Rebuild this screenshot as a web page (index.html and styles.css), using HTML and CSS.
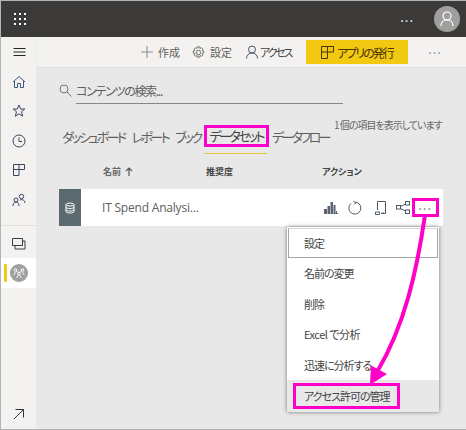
FILE: index.html
```html
<!DOCTYPE html>
<html lang="ja">

<head>
    <meta charset="UTF-8">
    <title>IT Spend</title>
    <link rel="stylesheet" href="styles.css">
</head>

<body>
    <div class="frame">
        <header class="topbar">
            <svg class="waffle" width="14" height="14" viewBox="0 0 14 14" fill="#fff">
                <rect x="1" y="1" width="2" height="2" /><rect x="6" y="1" width="2" height="2" /><rect x="11" y="1" width="2" height="2" />
                <rect x="1" y="6" width="2" height="2" /><rect x="6" y="6" width="2" height="2" /><rect x="11" y="6" width="2" height="2" />
                <rect x="1" y="11" width="2" height="2" /><rect x="6" y="11" width="2" height="2" /><rect x="11" y="11" width="2" height="2" />
            </svg>
            <span class="topbar-dots">...</span>
            <span class="avatar">
                <svg width="14" height="16" viewBox="0 0 14 16" fill="none" stroke="#fff" stroke-width="1.2">
                    <circle cx="7" cy="5" r="4" />
                    <path d="M1 15c0-4 2.500-6 6-6s6 2 6 6" />
                </svg>
            </span>
        </header>

        <div class="body-wrap">
            <nav class="sidebar">
                <div class="nav-icon nav-menu">
                    <svg width="14" height="10" viewBox="0 0 14 10" stroke="#252423" stroke-width="1"><path d="M1.500 1.500h12M1.500 5h12M1.500 8.500h12" /></svg>
                </div>
                <div class="nav-icon">
                    <svg width="14" height="14" viewBox="0 0 14 14" fill="none" stroke="#3a5a80" stroke-width="1"><path d="M1 7l6-5.500L13 7M2.500 6v6.500h3v-4h3v4h3V6" /></svg>
                </div>
                <div class="nav-icon">
                    <svg width="14" height="14" viewBox="0 0 14 14" fill="none" stroke="#3a4660" stroke-width="1"><path d="M7 1l1.700 4h4.100l-3.300 2.700 1.200 4.500L7 9.800l-3.700 2.400 1.200-4.500L1.200 5h4.100z" /></svg>
                </div>
                <div class="nav-icon">
                    <svg width="14" height="14" viewBox="0 0 14 14" fill="none" stroke="#3a4660" stroke-width="1"><circle cx="7" cy="7" r="6" /><path d="M7 3.500V7.500H10" /></svg>
                </div>
                <div class="nav-icon">
                    <svg width="14" height="14" viewBox="0 0 14 14" fill="none" stroke="#3a4660" stroke-width="1"><path d="M1.500 1.500h11v5h-5.500v6h-5.500zM1.500 6.500h5.500M7 1.500v5" /></svg>
                </div>
                <div class="nav-icon">
                    <svg width="14" height="14" viewBox="0 0 14 14" fill="none" stroke="#3a4660" stroke-width="1"><circle cx="4" cy="7" r="2" /><circle cx="9.500" cy="3.500" r="2.200" /><path d="M1 13c0-2.500 1-4 3-4s3 1.500 3 4M8 7c2.500-1 4.500 0 5 3" /></svg>
                </div>
                <div class="nav-sep"></div>
                <div class="nav-icon">
                    <svg width="14" height="12" viewBox="0 0 14 12" fill="none" stroke="#3a3a4a" stroke-width="1"><path d="M3 3h10v8H3z" /><path d="M.5 .5h10v7H.5z" fill="#f3f2f1" /></svg>
                </div>
                <div class="nav-active">
                    <span class="nav-marker"></span>
                    <span class="workspace-badge">
                        <svg width="12" height="12" viewBox="0 0 12 12" fill="none" stroke="#fff" stroke-width="1"><circle cx="2.500" cy="3" r="1.300" /><circle cx="9.500" cy="3" r="1.300" /><circle cx="6" cy="6.500" r="1.300" /><path d="M3.500 4l1.500 1.500M8.500 4L7 5.500M1 8c0-1.500 1-2.500 2-2.500M11 8c0-1.500-1-2.500-2-2.500M4 11c0-2 1-3 2-3s2 1 2 3" /></svg>
                    </span>
                </div>
                <div class="nav-expand">
                    <svg width="12" height="12" viewBox="0 0 12 12" fill="none" stroke="#333" stroke-width="1"><path d="M1 11L10.500 1.500M2.500 1.500h8v8" /></svg>
                </div>
            </nav>

            <div class="main-area">
                <div class="toolbar">
                    <span class="tool tool-create">
                        <svg width="12" height="12" viewBox="0 0 12 12" stroke="#8a8886" stroke-width="1"><path d="M6 0v12M0 6h12" /></svg>作成
                    </span>
                    <span class="tool tool-settings">
                        <svg width="13" height="13" viewBox="0 0 13 13" fill="none" stroke="#6f6e6c" stroke-width="1"><circle cx="6.500" cy="6.500" r="2.200" /><path d="M5.500 .8h2l.4 1.600 1.500-.7 1.400 1.400-.7 1.500 1.600.4v2l-1.600.4.700 1.500-1.400 1.400-1.500-.7-.4 1.600h-2l-.4-1.600-1.500.7-1.400-1.400.7-1.500-1.600-.4v-2l1.600-.4-.7-1.500 1.400-1.400 1.500.7z" /></svg>設定
                    </span>
                    <span class="tool tool-access">
                        <svg width="12" height="14" viewBox="0 0 12 14" fill="none" stroke="#45536b" stroke-width="1"><circle cx="6" cy="4.500" r="3.500" /><path d="M.5 13.500c0-3.500 2.500-5.500 5.500-5.500s5.500 2 5.500 5.500" /></svg><span class="access-label">アクセス</span>
                    </span>
                    <span class="publish">
                        <svg width="13" height="13" viewBox="0 0 13 13" fill="none" stroke="#4a3505" stroke-width="1"><path d="M.5 .5h12v5.500h-6v6.500h-6zM.5 6h6M6.500 .5V6" /></svg><span class="publish-label">アプリの発行</span>
                    </span>
                    <span class="toolbar-dots">...</span>
                </div>

                <div class="content">
                    <div class="search">
                        <svg width="13" height="13" viewBox="0 0 13 13" fill="none" stroke="#77787a" stroke-width="1"><circle cx="5" cy="5" r="4" /><path d="M8 8l4.500 4.500" /></svg>
                        <span class="search-field">コンテンツの検索...</span>
                    </div>

                    <div class="tabs-row">
                        <span class="tab">ダッシュボード</span>
                        <span class="tab">レポート</span>
                        <span class="tab">ブック</span>
                        <span class="tab tab-active"><span class="callout">データセット</span></span>
                        <span class="tab">データフロー</span>
                        <span class="item-count">1 個の項目を表示しています</span>
                    </div>

                    <div class="table-head">
                        <span class="col-name">名前
                            <svg width="8" height="9" viewBox="0 0 8 9" fill="none" stroke="#555" stroke-width="1.200"><path d="M4 9V1M1 4l3-3 3 3" /></svg>
                        </span>
                        <span class="col-rec">推奨度</span>
                        <span class="col-act">アクション</span>
                    </div>

                    <div class="dataset-row">
                        <span class="row-thumb">
                            <svg width="10" height="12" viewBox="0 0 10 12" fill="none" stroke="#fff" stroke-width="1"><ellipse cx="5" cy="2.500" rx="4" ry="1.500" /><path d="M1 2.500v7c0 1 1.800 1.500 4 1.500s4-.5 4-1.500v-7M1 5c0 1 1.800 1.500 4 1.500S9 6 9 5M1 7.500C1 8.500 2.800 9 5 9s4-.5 4-1.500" /></svg>
                        </span>
                        <span class="row-name">IT Spend Analysi...</span>
                        <span class="row-actions">
                            <svg width="14" height="14" viewBox="0 0 14 14" fill="#5a6570"><rect x="0" y="8" width="3" height="5" /><rect x="3.500" y="5" width="2.500" height="8" /><rect x="6.500" y="1" width="2.500" height="12" /><rect x="9.500" y="4" width="2" height="9" /><path d="M12 10h1v2h1v1h-3v-1h1z" /></svg>
                            <svg width="14" height="14" viewBox="0 0 14 14" fill="none" stroke="#4c5a68" stroke-width="1"><path d="M8 1.200A6 6 0 1 1 3 2.500M5.500 .5L8 1.500 6.500 3.500" /></svg>
                            <svg width="12" height="14" viewBox="0 0 12 14" fill="none" stroke="#4c5a68" stroke-width="1"><path d="M2.500 9V.5h8v12H6M.5 11h4v2.500h-4zM8 11v1.500" /></svg>
                            <svg width="14" height="13" viewBox="0 0 14 13" fill="none" stroke="#4c5a68" stroke-width="1"><rect x=".5" y="4.500" width="4" height="3.500" /><rect x="9.500" y=".5" width="4" height="3.500" /><rect x="9.500" y="9" width="4" height="3.500" /><path d="M4.500 5.500L9.500 3M4.500 7.500l5 2.500" /></svg>
                            <span class="row-dots">...</span>
                        </span>
                    </div>
                </div>
            </div>
        </div>

        <ul class="menu">
            <li class="menu-item menu-focus">設定</li>
            <li class="menu-item">名前の変更</li>
            <li class="menu-item">削除</li>
            <li class="menu-item menu-excel">Excel で分析</li>
            <li class="menu-item">迅速に分析する</li>
            <li class="menu-item menu-hover"><span class="callout callout-menu">アクセス許可の管理</span></li>
        </ul>

        <span class="callout-dots"></span>
        <svg class="arrow" width="466" height="430" viewBox="0 0 466 430" fill="none">
            <path d="M425 215C417 270 405 325 377 372" stroke="#ff00c8" stroke-width="4" />
            <path d="M371 383L372 367 385 374z" fill="#ff00c8" stroke="#ff00c8" stroke-width="2" />
        </svg>
    </div>
</body>

</html>
```

FILE: styles.css
```css
* {
    box-sizing: border-box;
}

body {
    margin: 0;
    font-family: "Noto Sans CJK JP", "Liberation Sans", sans-serif;
    font-feature-settings: "palt";
    color: #444;
    background-color: #fff;
}

.frame {
    position: relative;
    width: 466px;
    height: 430px;
    display: flex;
    flex-direction: column;
    overflow: hidden;
    border: 1px solid #b4b4b4;
    border-right: none;
}

/* top bar */
.topbar {
    height: 36px;
    flex: none;
    display: flex;
    align-items: center;
    padding: 0 3px 0 12px;
    background-color: #3b3a39;
}

.topbar-dots {
    margin-left: auto;
    margin-right: 20px;
    margin-top: -5px;
    color: #fff;
    font-size: 13px;
    letter-spacing: 1px;
}

.avatar {
    width: 26px;
    height: 26px;
    display: flex;
    align-items: center;
    justify-content: center;
    border-radius: 50%;
    background-color: #a19f9d;
    margin-right: 3px;
}

.body-wrap {
    flex: 1;
    display: flex;
    min-height: 0;
}

/* left nav */
.sidebar {
    width: 36px;
    flex: none;
    display: flex;
    flex-direction: column;
    background-color: #f3f2f1;
    border-right: 1px solid #ebeaea;
}

.nav-icon {
    height: 29.500px;
    display: flex;
    align-items: center;
    justify-content: center;
}

.nav-menu {
    height: 30px;
}

.nav-sep {
    height: 1px;
    margin-top: 10px;
    margin-bottom: 4px;
    background-color: #e1dfdd;
}

.nav-active {
    height: 30px;
    margin-top: -1px;
    display: flex;
    align-items: center;
    padding-left: 3px;
    background-color: #fff;
}

.nav-marker {
    width: 3px;
    height: 18px;
    border-radius: 1px;
    background-color: #f2c811;
}

.workspace-badge {
    width: 18px;
    height: 18px;
    margin-left: 3px;
    display: flex;
    align-items: center;
    justify-content: center;
    border-radius: 50%;
    background-color: #a0a0a0;
}

.nav-expand {
    margin-top: auto;
    height: 30px;
    display: flex;
    align-items: center;
    justify-content: center;
}

/* toolbar */
.main-area {
    flex: 1;
    min-width: 0;
    display: flex;
    flex-direction: column;
    background-color: #e8e8e8;
}

.toolbar {
    height: 31px;
    flex: none;
    display: flex;
    align-items: center;
    padding-left: 104px;
    font-size: 11px;
    color: #605e5c;
    background-color: #f3f2f1;
    border-bottom: 1px solid #e1dfdd;
}

.tool {
    display: flex;
    align-items: center;
    gap: 5px;
    margin-right: 12px;
}

.tool-settings {
    margin-right: 14px;
}

.tool-access {
    gap: 2px;
    color: #444;
    margin-right: 15px;
}

.access-label {
    letter-spacing: -2.200px;
}

.publish {
    width: 102px;
    height: 24px;
    display: flex;
    align-items: center;
    padding-left: 15px;
    gap: 3px;
    font-size: 12px;
    color: #4a3505;
    background-color: #f2c811;
}

.publish-label {
    letter-spacing: -2px;
}

.toolbar-dots {
    margin-left: 20px;
    margin-top: -7px;
    font-size: 13px;
    letter-spacing: 1px;
    color: #8a8886;
}

/* content */
.content {
    flex: 1;
    padding-top: 12px;
    padding-left: 22px;
}

.search {
    display: flex;
    align-items: flex-start;
    gap: 4px;
    height: 24px;
}

.search svg {
    margin-top: 4px;
}

.search-field {
    width: 267px;
    height: 24px;
    line-height: 22px;
    font-size: 12px;
    letter-spacing: -1.300px;
    color: #605e5c;
    border-bottom: 1px solid #8a8886;
}

.tabs-row {
    position: relative;
    display: flex;
    align-items: center;
    height: 50px;
    margin-top: 4px;
    font-size: 13px;
    letter-spacing: -2.600px;
    color: #605e5c;
    gap: 7px;
}

.tab {
    white-space: nowrap;
    padding-top: 6px;
}

.tab:first-child {
    margin-left: 3px;
}

.tab-active {
    position: relative;
    color: #444;
    margin-left: -4px;
    margin-right: -4px;
}

.tab-active::after {
    content: "";
    position: absolute;
    left: 0;
    right: 2px;
    bottom: -7px;
    height: 1px;
    background-color: #e5c73b;
}

.callout {
    display: inline-block;
    border: 3px solid #ff00c8;
    padding: 0 3px;
    line-height: 16px;
}

.item-count {
    position: absolute;
    left: 275px;
    top: 9px;
    font-size: 10px;
    letter-spacing: -1px;
    color: #666;
    white-space: nowrap;
}

.table-head {
    display: flex;
    align-items: center;
    height: 20px;
    margin-top: 3px;
    font-size: 9px;
    font-weight: bold;
    color: #444;
}

.col-name {
    width: 147px;
    padding-left: 44px;
    display: flex;
    align-items: center;
    gap: 4px;
    color: #666;
}

.col-rec {
    width: 116px;
}

.dataset-row {
    width: 384px;
    height: 37px;
    margin-top: 8px;
    display: flex;
    align-items: center;
    background-color: #fff;
}

.row-thumb {
    width: 22px;
    height: 37px;
    display: flex;
    align-items: center;
    justify-content: center;
    background-color: #5b6a6e;
}

.row-name {
    margin-left: 21px;
    font-family: "Open Sans", "Liberation Sans", sans-serif;
    font-size: 12px;
    letter-spacing: -0.200px;
    color: #605e5c;
}

.row-actions {
    margin-left: auto;
    margin-right: 11px;
    display: flex;
    align-items: center;
    gap: 10px;
}

.row-actions svg:nth-child(2) {
    margin-right: 3px;
}

.row-actions svg:nth-child(3) {
    margin-right: -1px;
}

.row-dots {
    margin-top: -7px;
    margin-left: -2px;
    font-size: 13px;
    letter-spacing: 1px;
    color: #777;
}

/* overlays: context menu and the pink annotations */
.menu {
    position: absolute;
    left: 286px;
    top: 226px;
    width: 152px;
    margin: 0;
    padding: 1px 0 0;
    list-style: none;
    font-size: 11px;
    letter-spacing: -1px;
    color: #444;
    background-color: #fff;
    box-shadow: 0 0 4px rgba(0, 0, 0, 0.5);
}

.menu-item {
    height: 30.500px;
    display: flex;
    align-items: center;
    padding-left: 17px;
    white-space: pre;
}

.menu-focus {
    height: 30px;
    margin: 0 1px;
    padding-left: 15px;
    border: 1px solid #a6a6a6;
    border-top-color: #d8d8d8;
}

.menu-excel {
    letter-spacing: -0.500px;
}

.menu-hover {
    height: 32px;
    padding-left: 6px;
    background-color: #e8e8e8;
}

.callout-menu {
    width: 107px;
    height: 26px;
    line-height: 20px;
    padding: 0 0 0 8px;
}

.callout-dots {
    position: absolute;
    left: 411px;
    top: 197px;
    width: 27px;
    height: 19px;
    border: 3px solid #ff00c8;
}

.arrow {
    position: absolute;
    left: -1px;
    top: -1px;
    pointer-events: none;
}
```
